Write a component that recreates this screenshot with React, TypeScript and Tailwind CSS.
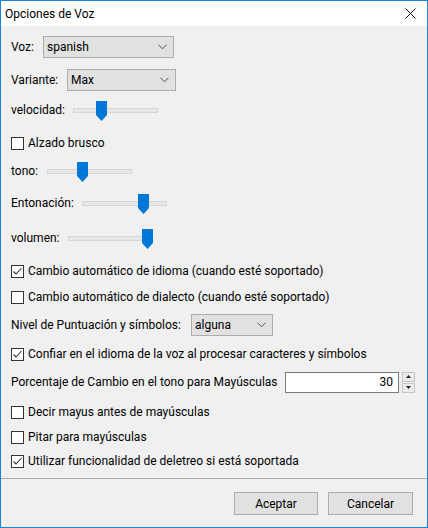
import React from "react";

const font = { fontFamily: 'Roboto, "Noto Sans", sans-serif' };

function Chevron() {
  return (
    <svg width="9" height="6" viewBox="0 0 9 6" className="shrink-0">
      <path d="M0.5 0.8 L4.5 4.8 L8.5 0.8" fill="none" stroke="#4d4d4d" strokeWidth="1" />
    </svg>
  );
}

function Combo({ value, className }: { value: string; className: string }) {
  return (
    <div className={`flex h-[22px] items-center justify-between border border-[#adadad] bg-[#e1e1e1] pl-[3px] pr-[6px] ${className}`}>
      <span>{value}</span>
      <Chevron />
    </div>
  );
}

function Check({ checked, label, className = "" }: { checked?: boolean; label: string; className?: string }) {
  return (
    <div className={`flex h-[22px] items-center whitespace-nowrap ${className}`}>
      <div className="flex h-[13px] w-[13px] items-center justify-center border border-[#333333] bg-white">
        {checked && (
          <svg width="11" height="11" viewBox="0 0 11 11">
            <path d="M1.5 5.5 L4 8 L9.5 2" fill="none" stroke="#333333" strokeWidth="1.1" />
          </svg>
        )}
      </div>
      <span className="ml-[4px] text-black">{label}</span>
    </div>
  );
}

function Slider({ label, labelW, thumb, className }: { label: string; labelW: string; thumb: number; className: string }) {
  return (
    <div className={`flex h-[22px] items-center whitespace-nowrap ${className}`}>
      <span className={labelW}>{label}</span>
      <div className="relative h-[5px] w-[85px] border border-[#d6d6d6] bg-[#e7e7e7]">
        <svg
          width="11"
          height="20"
          viewBox="0 0 11 20"
          className="absolute top-[-8px]"
          style={{ left: thumb }}
        >
          <path d="M0 0 H11 V14 L5.5 20 L0 14 Z" fill="#0078d7" />
        </svg>
      </div>
    </div>
  );
}

export default function App() {
  return (
    <div
      className="flex h-[528px] w-[428px] flex-col border border-[#1883d7] bg-[#f0f0f0] text-[12px] text-black"
      style={font}
    >
      {/* title bar */}
      <div className="flex h-[25px] shrink-0 items-center justify-between bg-white pl-[4px] pr-[11px]">
        <span>Opciones de Voz</span>
        <svg width="11" height="11" viewBox="0 0 11 11">
          <path d="M0.5 0.5 L10.5 10.5 M10.5 0.5 L0.5 10.5" stroke="#111" strokeWidth="1" />
        </svg>
      </div>

      <div className="flex flex-1 flex-col pl-[10px]">
        <div className="mt-[10px] flex h-[22px] items-center">
          <span className="w-[32px]">Voz:</span>
          <Combo value="spanish" className="w-[131px]" />
        </div>
        <div className="mt-[11px] flex h-[22px] items-center">
          <span className="w-[56px]">Variante:</span>
          <Combo value="Max" className="w-[109px]" />
        </div>

        <Slider label="velocidad:" labelW="w-[62px]" thumb={22} className="mt-[8px]" />
        <Check label="Alzado brusco" className="mt-[11px]" />
        <Slider label="tono:" labelW="w-[36px]" thumb={29} className="mt-[6px]" />
        <Slider label="Entonación:" labelW="w-[71px]" thumb={55} className="mt-[10px]" />
        <Slider label="volumen:" labelW="w-[57px]" thumb={73} className="mt-[13px]" />

        <Check checked label="Cambio automático de idioma (cuando esté soportado)" className="mt-[11px]" />
        <Check label="Cambio automático de dialecto (cuando esté soportado)" className="mt-[4px]" />

        <div className="mt-[6px] flex h-[22px] items-center whitespace-nowrap">
          <span className="w-[180px]">Nivel de Puntuación y símbolos:</span>
          <Combo value="alguna" className="w-[82px]" />
        </div>

        <Check checked label="Confiar en el idioma de la voz al procesar caracteres y símbolos" className="mt-[7px]" />

        <div className="mt-[6px] flex h-[22px] items-center whitespace-nowrap">
          <span className="w-[274px]">Porcentaje de Cambio en el tono para Mayúsculas</span>
          <div className="flex h-[21px] w-[114px] items-center justify-end border border-[#7a7a7a] bg-white pr-[5px]">
            30
          </div>
          <div className="ml-[3px] flex h-[21px] w-[13px] flex-col gap-[1px]">
            <div className="flex h-[10px] items-center justify-center border border-[#c5c5c5] bg-[#ececec]">
              <svg width="5" height="3" viewBox="0 0 5 3">
                <path d="M0 3 L2.5 0 L5 3 Z" fill="#222" />
              </svg>
            </div>
            <div className="flex h-[10px] items-center justify-center border border-[#c5c5c5] bg-[#ececec]">
              <svg width="5" height="3" viewBox="0 0 5 3">
                <path d="M0 0 L2.5 3 L5 0 Z" fill="#222" />
              </svg>
            </div>
          </div>
        </div>

        <Check label="Decir mayus antes de mayúsculas" className="mt-[8px]" />
        <Check label="Pitar para mayúsculas" className="mt-[3px]" />
        <Check checked label="Utilizar funcionalidad de deletreo si está soportada" className="mt-[2px]" />
      </div>

      {/* separator + buttons */}
      <div className="h-px w-full shrink-0 bg-[#a9a9a9]" />
      <div className="flex h-[48px] shrink-0 items-start justify-end gap-[10px] pr-[14px] pt-[13px]">
        <button className="h-[23px] w-[84px] border border-[#adadad] bg-[#e1e1e1]">Aceptar</button>
        <button className="h-[23px] w-[85px] border border-[#adadad] bg-[#e1e1e1]">Cancelar</button>
      </div>
    </div>
  );
}
